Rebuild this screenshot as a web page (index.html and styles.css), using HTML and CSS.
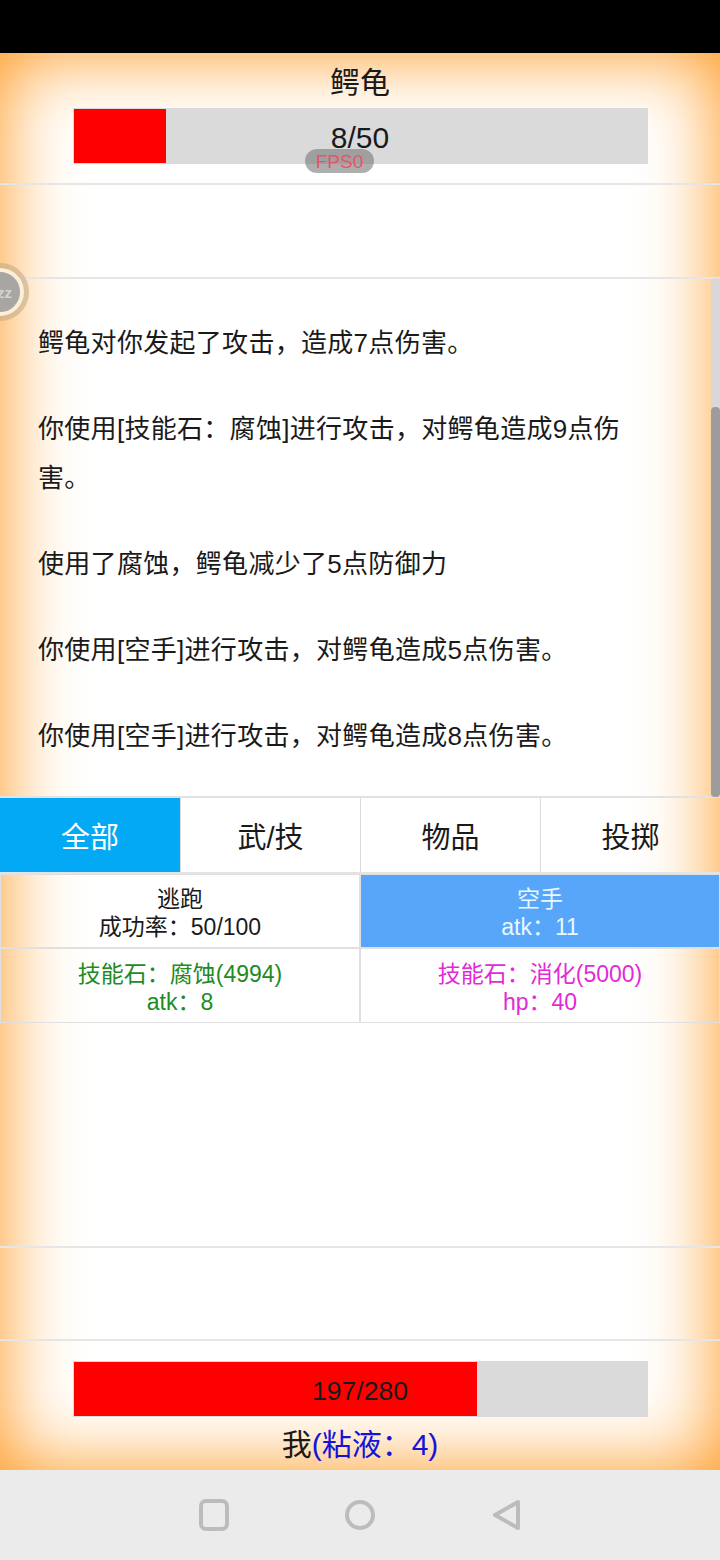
FILE: index.html
```html
<!DOCTYPE html>
<html lang="zh">
<head>
    <meta charset="UTF-8">
    <meta name="viewport" content="width=device-width, initial-scale=1.0">
    <title>鳄龟</title>
    <link rel="stylesheet" href="styles.css">
</head>
<body>
    <div class="status-bar"></div>

    <div class="page">
        <div class="fighter enemy">
            <div class="name">鳄龟</div>
            <div class="bar">
                <div class="bar-fill enemy-fill"></div>
                <span class="bar-text">8/50</span>
            </div>
        </div>

        <div class="empty-row top-row"></div>

        <div class="log">
            <p>鳄龟对你发起了攻击，造成7点伤害。</p>
            <p>你使用[技能石：腐蚀]进行攻击，对鳄龟造成9点伤害。</p>
            <p>使用了腐蚀，鳄龟减少了5点防御力</p>
            <p>你使用[空手]进行攻击，对鳄龟造成5点伤害。</p>
            <p>你使用[空手]进行攻击，对鳄龟造成8点伤害。</p>
        </div>

        <div class="tabs">
            <div class="tab active">全部</div>
            <div class="tab">武/技</div>
            <div class="tab">物品</div>
            <div class="tab">投掷</div>
        </div>

        <div class="actions">
            <div class="action">逃跑<br>成功率：50/100</div>
            <div class="action selected">空手<br>atk：11</div>
            <div class="action green">技能石：腐蚀(4994)<br>atk：8</div>
            <div class="action pink">技能石：消化(5000)<br>hp：40</div>
        </div>

        <div class="spacer"></div>

        <div class="empty-row bottom-row"></div>

        <div class="fighter player">
            <div class="bar">
                <div class="bar-fill player-fill"></div>
                <span class="bar-text small">197/280</span>
            </div>
            <div class="name">我<span class="pet">(粘液：4)</span></div>
        </div>

        <!-- overlays -->
        <div class="fps">FPS0</div>
        <div class="float-ball"><span>zz</span></div>
        <div class="scroll-track"><div class="scroll-thumb"></div></div>
    </div>

    <div class="nav-bar">
        <svg class="nav-icon" viewBox="0 0 32 32"><rect x="3" y="2" width="26" height="28" rx="5"/></svg>
        <svg class="nav-icon" viewBox="0 0 32 32"><circle cx="16" cy="16" r="13"/></svg>
        <svg class="nav-icon" viewBox="0 0 32 32"><path d="M28 3 L28 29 L5 16 Z"/></svg>
    </div>
</body>
</html>
```

FILE: styles.css
```css
* {
    box-sizing: border-box;
}
body {
    margin: 0;
    width: 720px;
    height: 1560px;
    overflow: hidden;
    display: flex;
    flex-direction: column;
    font-family: "Liberation Sans", "Noto Sans CJK SC", sans-serif;
    color: #1a1a1a;
    background-color: white;
}
.status-bar {
    height: 53px;
    background-color: black;
}
.page {
    position: relative;
    height: 1417px;
    display: flex;
    flex-direction: column;
    background-color: white;
    box-shadow: inset 0 0 78px #ff9416;
}
.fighter {
    display: flex;
    flex-direction: column;
    align-items: center;
}
.enemy {
    height: 132px;
    border-bottom: 2px solid #e6e6e6;
}
.enemy .name {
    height: 55px;
    line-height: 59px;
    font-size: 30px;
}
.player {
    height: 129px;
    padding-top: 20px;
}
.player .name {
    height: 54px;
    line-height: 55px;
    font-size: 30px;
}
.pet {
    color: #1414d8;
}
.bar {
    position: relative;
    flex: none;
    width: 575px;
    height: 56px;
    padding: 1px;
    background-color: #dadada;
    text-align: center;
}
.bar-fill {
    height: 100%;
    background-color: red;
}
.enemy-fill {
    width: 92px;
}
.player-fill {
    width: 403px;
}
.bar-text {
    position: absolute;
    left: 0;
    right: 0;
    top: 14px;
    line-height: 32px;
    font-size: 30px;
}
.small {
    font-size: 26.5px;
}
.empty-row {
    flex: none;
}
.top-row {
    height: 94px;
    border-bottom: 2px solid #e6e6e6;
}
.bottom-row {
    height: 95px;
    border-top: 2px solid #e6e6e6;
    border-bottom: 2px solid #e6e6e6;
}
.log {
    height: 519px;
    padding: 40px 90px 0 38px;
    font-size: 26px;
    letter-spacing: 0.3px;
    line-height: 49px;
    border-bottom: 2px solid #e2e2e2;
}
.log p {
    margin: 0 0 37px;
}
.tabs {
    display: grid;
    grid-template-columns: repeat(4, 1fr);
    height: 74px;
    flex: none;
}
.tab {
    display: flex;
    align-items: center;
    justify-content: center;
    font-size: 29px;
    border-left: 1px solid #dcdcdc;
}
.tab.active {
    background-color: #03a9f4;
    color: white;
    border-left: none;
}
.actions {
    display: grid;
    grid-template-columns: 1fr 1fr;
    grid-template-rows: 74px 75px;
    flex: none;
    border-top: 2px solid #e4e4e4;
}
.action {
    display: flex;
    flex-direction: column;
    justify-content: center;
    padding-top: 4px;
    text-align: center;
    font-size: 23px;
    line-height: 28px;
    border: 1px solid #e0e0e0;
}
.action.selected {
    background-color: #58a6fa;
    color: #e8f8ff;
}
.green {
    color: #228b22;
}
.pink {
    color: #e22ad6;
}
.spacer {
    flex: 1;
}
.fps {
    position: absolute;
    left: 305px;
    top: 96px;
    width: 69px;
    height: 24px;
    border-radius: 12px;
    background-color: rgba(120, 120, 120, 0.6);
    color: #e4566a;
    font-size: 19px;
    line-height: 25px;
    text-align: center;
}
.float-ball {
    position: absolute;
    left: -24px;
    top: 215px;
    width: 48px;
    height: 48px;
    display: flex;
    align-items: center;
    justify-content: flex-end;
    padding-right: 8px;
    border-radius: 50%;
    background-color: #a8a6a2;
    border: 4px solid #fdeed8;
    outline: 5px solid rgba(190, 165, 130, 0.55);
    color: #d6d3cc;
    font-size: 15px;
    font-weight: bold;
}
.scroll-track {
    position: absolute;
    right: 0;
    top: 225px;
    width: 9px;
    height: 519px;
    border-radius: 4px 4px 0 0;
    background-color: #d8d8d8;
    display: flex;
    align-items: flex-end;
}
.scroll-thumb {
    width: 100%;
    height: 390px;
    border-radius: 4px;
    background-color: #9c9c9c;
}
.nav-bar {
    flex: 1;
    display: flex;
    align-items: center;
    justify-content: center;
    gap: 114px;
    background-color: #ebebeb;
}
.nav-icon {
    width: 32px;
    height: 32px;
    fill: none;
    stroke: #bcbcbc;
    stroke-width: 4;
    stroke-linejoin: round;
}
```
